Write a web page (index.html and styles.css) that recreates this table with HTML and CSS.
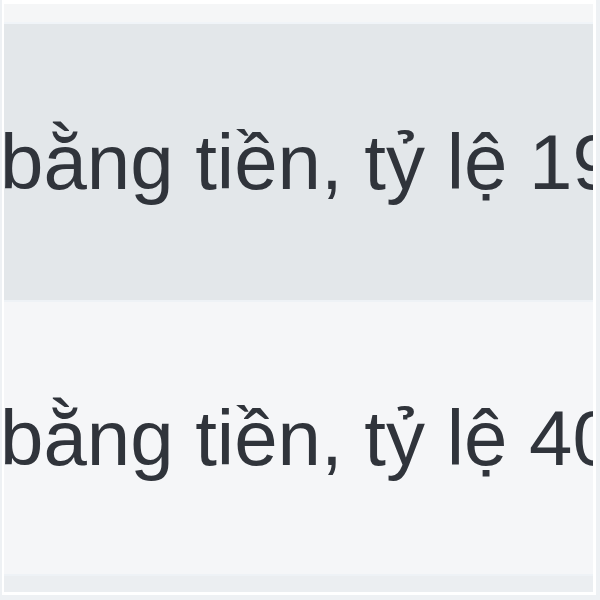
FILE: index.html
```html
<!DOCTYPE html>
<html lang="vi">
<head>
  <meta charset="UTF-8">
  <meta name="viewport" content="width=device-width, initial-scale=1.0">
  <title>Bảng tỷ lệ</title>
  <link rel="stylesheet" href="styles.css">
</head>
<body>
  <div class="sheet">
    <div class="head"></div>
    <div class="row shade">
      <div class="cell">bằng tiền, tỷ lệ 19%</div>
    </div>
    <div class="row last">
      <div class="cell">bằng tiền, tỷ lệ 40%</div>
    </div>
    <div class="foot"></div>
  </div>
</body>
</html>
```

FILE: styles.css
```css
body {
  margin: 0;
  background: #eef1f4;
  font-family: "Liberation Sans", Arial, sans-serif;
}
.sheet {
  margin-left: 2px;
  width: 589px;
  border-top: 4px solid #fff;
  border-left: 2px solid #fff;
  border-right: 3px solid #fff;
}
.head {
  height: 18px;
  background: #f5f6f7;
  border-bottom: 2px solid #f0f4f8;
}
.row {
  height: 276px;
  display: flex;
  align-items: center;
  background: #f5f6f8;
  border-bottom: 2px solid #eef2f6;
  overflow: hidden;
}
.row.shade {
  background: #e3e7ea;
}
.row.last {
  height: 272px;
}
.cell {
  margin-left: -4px;
  font-size: 78px;
  color: #30343b;
  white-space: nowrap;
}
.foot {
  height: 16px;
  background: #ebeef1;
  border-bottom: 3px solid #fff;
}
```
